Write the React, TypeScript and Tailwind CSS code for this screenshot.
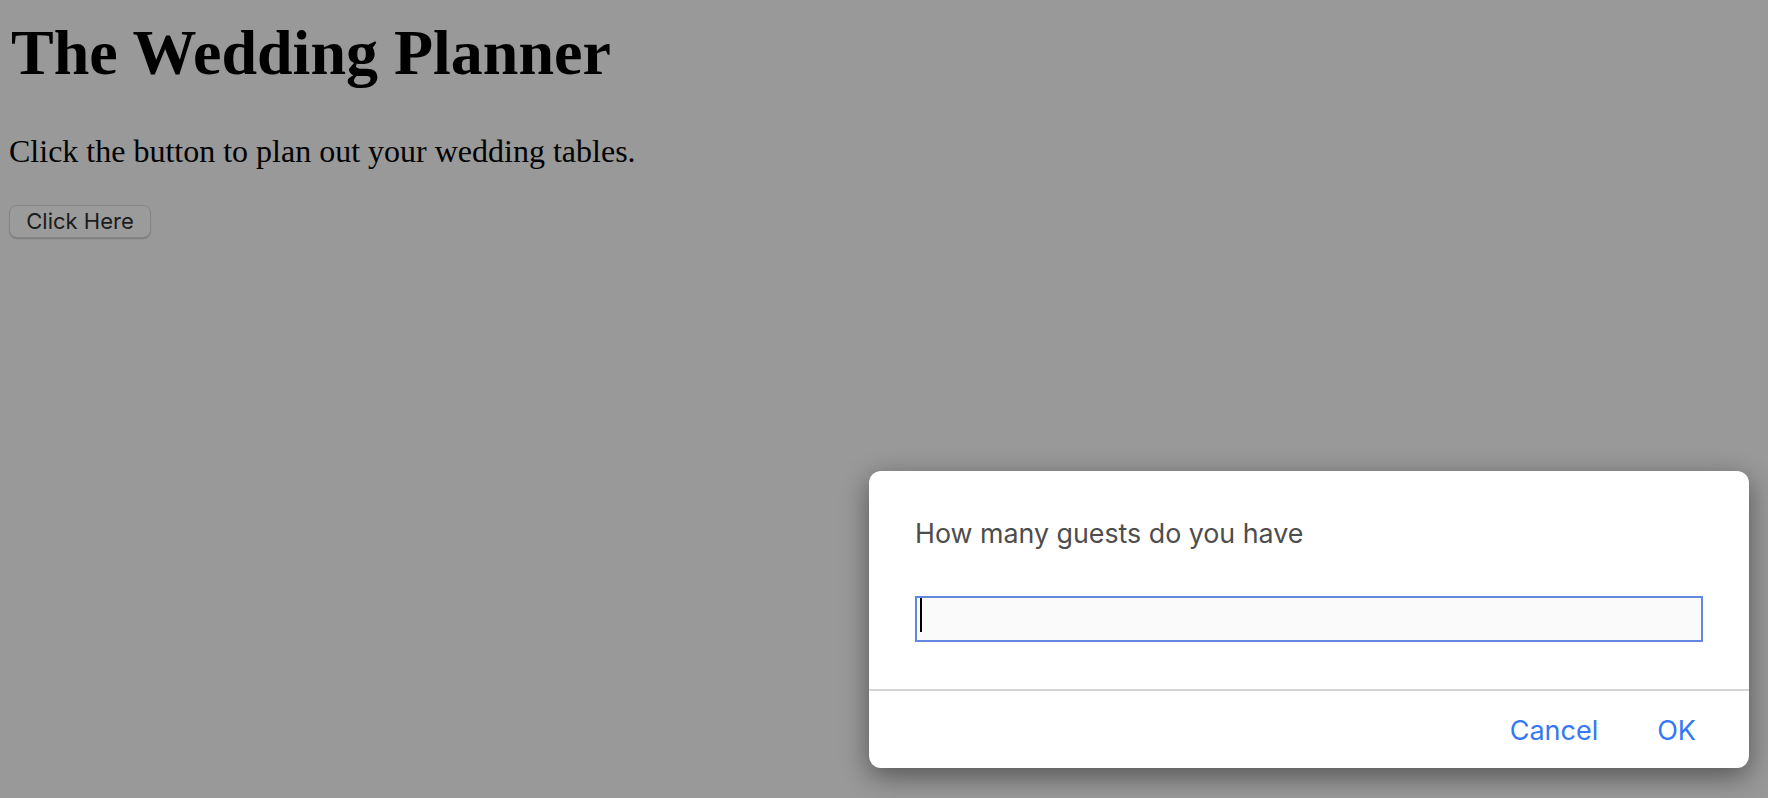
import React, { useState } from 'react';

export default function App() {
  const [guests, setGuests] = useState('');

  return (
    <div className="min-h-screen w-full bg-[#999999] relative overflow-hidden">
      {/* Page content (dimmed behind the prompt) */}
      <div className="pl-[9px] pt-[17px]" style={{ fontFamily: '"Liberation Serif", "Times New Roman", serif' }}>
        <h1 className="ml-[2px] text-[64px] leading-[72px] font-bold text-black">The Wedding Planner</h1>
        <p className="mt-[44px] text-[32px] leading-[36px] text-black">
          Click the button to plan out your wedding tables.
        </p>
        <button
          className="mt-[36px] w-[142px] h-[33px] rounded-[8px] border border-[#868686] bg-[#9b9b9b] shadow-[0_1px_1px_rgba(0,0,0,0.2)] text-[22px] text-[#1c1c1c] flex items-center justify-center"
          style={{ fontFamily: 'Inter, "Liberation Sans", sans-serif' }}
        >
          Click Here
        </button>
      </div>

      {/* Prompt dialog */}
      <div
        className="absolute right-[19px] bottom-[30px] w-[880px] bg-white rounded-[12px] shadow-[0_8px_28px_rgba(0,0,0,0.45)]"
        style={{ fontFamily: 'Inter, "Liberation Sans", sans-serif' }}
      >
        <div className="px-[46px] pt-[46px] pb-[47px]">
          <p className="text-[26.8px] leading-[32px] text-[#4d4d4d]">How many guests do you have</p>
          <div className="mt-[47px] h-[46px] border-2 border-[#6188dc] bg-[#fafafa] relative flex items-center pl-[4px]">
            <input
              value={guests}
              onChange={(e) => setGuests(e.target.value)}
              className="w-full h-full bg-transparent outline-none text-[24px] text-black caret-transparent"
            />
            {/* text caret */}
            {guests === '' && <span className="absolute left-[3px] top-0 w-[2px] h-[34px] bg-black pointer-events-none" />}
          </div>
        </div>
        <div className="h-[2px] bg-[#d4d4d4]" />
        <div className="flex justify-end items-center gap-[59px] pr-[53px] pt-[24px] pb-[21px]">
          <button className="text-[27px] leading-[32px] text-[#3478f6]">Cancel</button>
          <button className="text-[27px] leading-[32px] text-[#3478f6]">OK</button>
        </div>
      </div>
    </div>
  );
}
